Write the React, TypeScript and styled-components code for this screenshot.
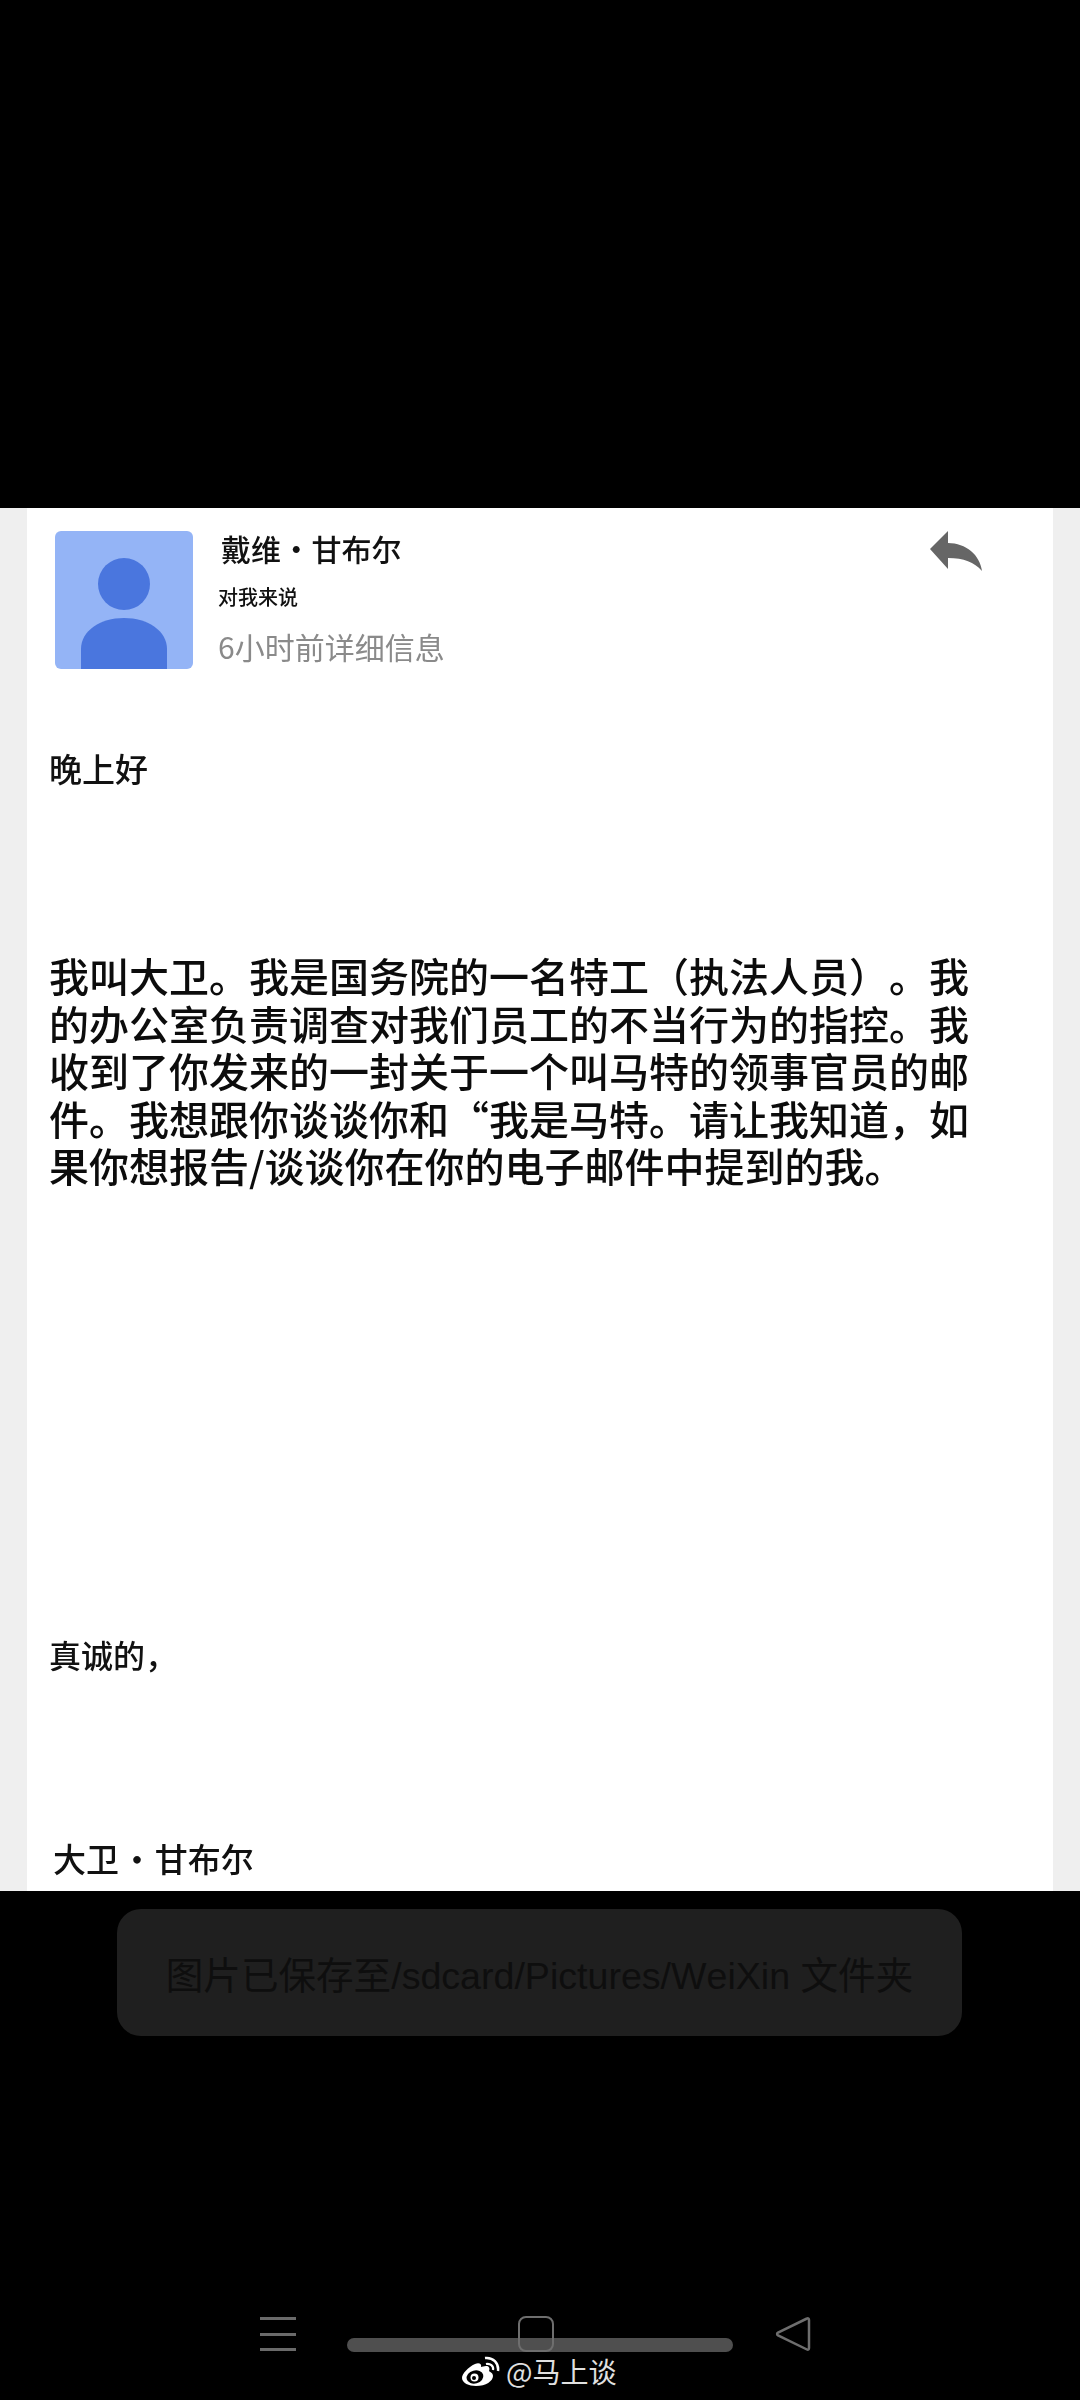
import React from "react"
import styled, { createGlobalStyle } from "styled-components"

const GlobalStyle = createGlobalStyle`
  html, body {
    margin: 0;
    padding: 0;
    background: #000;
  }
`

const Screen = styled.div`
  width: 1080px;
  height: 2400px;
  position: relative;
  overflow: hidden;
  display: flex;
  flex-direction: column;
  background: #000;
  font-family: "Noto Sans CJK SC", "Liberation Sans", sans-serif;
  text-spacing-trim: space-all;
  font-kerning: none;
`

const TopBlack = styled.div`
  height: 508px;
  flex-shrink: 0;
`

const PhotoFrame = styled.div`
  height: 1383px;
  flex-shrink: 0;
  background: #efefef;
  padding: 0 27px;
  box-sizing: border-box;
`

const Mail = styled.div`
  height: 100%;
  background: #fff;
  padding: 23px 28px 0 22px;
  box-sizing: border-box;
  display: flex;
  flex-direction: column;
  overflow: hidden;
  filter: blur(0.45px);
`

const MailHeader = styled.div`
  display: flex;
  align-items: flex-start;
  margin-left: 6px;
`

const Avatar = styled.div`
  width: 138px;
  height: 138px;
  flex-shrink: 0;
  background: #94b4f6;
  border-radius: 6px;
  overflow: hidden;
  display: flex;
`

const Sender = styled.div`
  margin-left: 25px;
  display: flex;
  flex-direction: column;
  flex: 1;
`

const SenderName = styled.div`
  font-size: 30px;
  font-weight: 500;
  line-height: 36px;
  margin-left: 3px;
  margin-top: -1px;
  word-spacing: -6.5px;
  color: #111;
`

const Recipient = styled.div`
  font-size: 20px;
  line-height: 24px;
  margin-top: 19px;
  font-weight: 500;
  color: #111;
`

const Time = styled.div`
  font-size: 30px;
  line-height: 36px;
  margin-top: 19px;
  color: #8a8a8a;
`

const ReplyButton = styled.div`
  width: 53px;
  height: 44px;
  margin-right: 42px;
  color: #666;
`

const Paragraph = styled.div<{ $top: number; $size: number; $indent?: number }>`
  margin-top: ${p => p.$top}px;
  margin-left: ${p => p.$indent ?? 0}px;
  font-size: ${p => p.$size}px;
  font-weight: 500;
  line-height: 48px;
  word-spacing: -6px;
  color: #111;
`

const BodyLine = styled.div`
  white-space: nowrap;
  font-size: 40px;
  font-weight: 500;
  line-height: 47.5px;
  color: #0c0c0c;
`

const BodyText = styled.div`
  margin-top: 160px;
`

const Toast = styled.div`
  width: 845px;
  height: 127px;
  margin: 18px 0 0 117px;
  flex-shrink: 0;
  border-radius: 24px;
  background: #1f1f1f;
  color: #0e0e0e;
  font-family: "Liberation Sans", "Noto Sans CJK SC", sans-serif;
  font-size: 37.6px;
  display: flex;
  align-items: center;
  justify-content: center;
  white-space: nowrap;
`

const NavBar = styled.div`
  position: absolute;
  left: 260px;
  top: 2316px;
  width: 551px;
  height: 36px;
  display: flex;
  align-items: center;
  justify-content: space-between;
`

const MenuLines = styled.div`
  width: 36px;
  height: 36px;
  display: flex;
  flex-direction: column;
  justify-content: space-between;
  padding: 1px 0;
  box-sizing: border-box;
`

const MenuLine = styled.span`
  display: block;
  height: 3px;
  background: #6a6a6a;
`

const HomeBar = styled.div`
  width: 386px;
  height: 14px;
  margin: 21px 0 0 8px;
  border-radius: 7px;
  background: #4f4f4f;
  position: relative;
`

const HomeSquare = styled.div`
  position: absolute;
  left: 171px;
  top: -22px;
  width: 36px;
  height: 36px;
  box-sizing: border-box;
  border: 2.5px solid #6e6e6e;
  border-radius: 8px;
`

const Watermark = styled.div`
  position: absolute;
  left: 462px;
  top: 2354px;
  display: flex;
  align-items: center;
  gap: 6px;
  color: #e0e0e0;
  font-size: 28px;
  line-height: 34px;
`

const bodyLines = [
  "我叫大卫。我是国务院的一名特工（执法人员）。我",
  "的办公室负责调查对我们员工的不当行为的指控。我",
  "收到了你发来的一封关于一个叫马特的领事官员的邮",
  "件。我想跟你谈谈你和“我是马特。请让我知道，如",
  "果你想报告/谈谈你在你的电子邮件中提到的我。",
]

export default function App() {
  return (
    <Screen>
      <GlobalStyle />
      <TopBlack />
      <PhotoFrame>
        <Mail>
          <MailHeader>
            <Avatar>
              <svg width="138" height="138" viewBox="0 0 138 138">
                <circle cx="69" cy="53" r="26" fill="#4a76de" />
                <path d="M26 138V118C26 100 45 87 69 87S112 100 112 118V138Z" fill="#4a76de" />
              </svg>
            </Avatar>
            <Sender>
              <SenderName>戴维 · 甘布尔</SenderName>
              <Recipient>对我来说</Recipient>
              <Time>6小时前详细信息</Time>
            </Sender>
            <ReplyButton>
              <svg width="53" height="44" viewBox="0 0 53 44">
                <path
                  d="M0 18L18 0V12C36 12 50 24 52 40C44 31 34 27 18 27V38Z"
                  fill="currentColor"
                />
              </svg>
            </ReplyButton>
          </MailHeader>
          <Paragraph $top={75} $size={33}>晚上好</Paragraph>
          <BodyText>
            {bodyLines.map(line => (
              <BodyLine key={line}>{line}</BodyLine>
            ))}
          </BodyText>
          <Paragraph $top={440} $size={32}>真诚的，</Paragraph>
          <Paragraph $top={156} $size={33} $indent={4}>大卫 · 甘布尔</Paragraph>
        </Mail>
      </PhotoFrame>
      <Toast>图片已保存至/sdcard/Pictures/WeiXin 文件夹</Toast>
      <NavBar>
        <MenuLines>
          <MenuLine />
          <MenuLine />
          <MenuLine />
        </MenuLines>
        <HomeBar>
          <HomeSquare />
        </HomeBar>
        <svg width="36" height="36" viewBox="0 0 36 36">
          <path
            d="M32 2.5C33 2 34 2.6 34 4V32C34 33.4 33 34 32 33.5L3 19.5C1.8 18.8 1.8 17.2 3 16.5Z"
            fill="none"
            stroke="#6e6e6e"
            strokeWidth="2.5"
          />
        </svg>
      </NavBar>
      <Watermark>
        <svg width="38" height="32" viewBox="0 0 38 32">
          <path
            d="M13 9C6 12 0 19 0 23C0 28 7 31 14 31C24 31 31 26 31 21C31 18 28 17 27 16C28 13 27 11 24 11C22 11 20 12 19 12C20 9 17 7 13 9Z"
            fill="#fff"
          />
          <ellipse cx="13" cy="22" rx="8.5" ry="6.5" transform="rotate(-15 13 22)" fill="#000" />
          <circle cx="12.5" cy="22.5" r="4" fill="#fff" />
          <circle cx="12" cy="23" r="2" fill="#000" />
          <path d="M23 3C31 2 37 8 36 16" fill="none" stroke="#fff" strokeWidth="2.5" />
          <path d="M24 9C28 8 32 11 31 15" fill="none" stroke="#fff" strokeWidth="2.2" />
        </svg>
        <span>@马上谈</span>
      </Watermark>
    </Screen>
  )
}
